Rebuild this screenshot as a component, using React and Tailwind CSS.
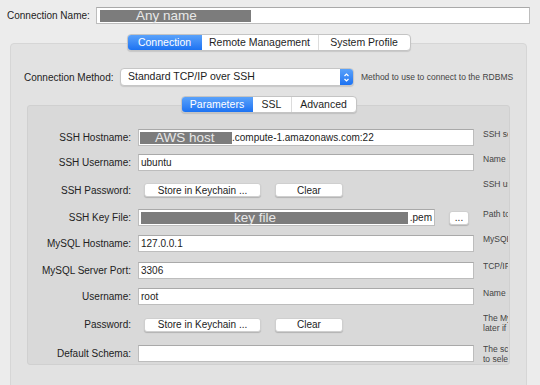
import React from 'react';

const FONT = { fontFamily: '"Liberation Sans", Arial, sans-serif' };

const Segmented = ({ items, active }) => (
  <div className="flex h-[17px] rounded-[4px] border border-[#c4c4c4] bg-white shadow-[0_1px_1px_rgba(0,0,0,0.12)] overflow-hidden">
    {items.map((item, index) => (
      <div
        key={item.label}
        className={`flex items-center justify-center text-[10.5px] leading-none ${item.w} ${
          index === active
            ? 'bg-gradient-to-b from-[#5aa2fa] to-[#1b72f2] text-white'
            : 'text-[#1e1e1e]'
        } ${index > 0 && index !== active && index - 1 !== active ? 'border-l border-[#dcdcdc]' : ''}`}
      >
        {item.label}
      </div>
    ))}
  </div>
);

const Input = ({ className = 'w-[336px]', children }) => (
  <div
    className={`h-[17px] bg-white border border-[#bdbdbd] border-t-[#a9a9a9] flex items-center px-[2px] text-[10px] text-[#1c1c1c] whitespace-nowrap overflow-hidden ${className}`}
  >
    {children}
  </div>
);

const Button = ({ className, children }) => (
  <div
    className={`h-[14px] bg-white rounded-[3px] border border-[#cfcfcf] shadow-[0_1px_1px_rgba(0,0,0,0.18)] flex items-center justify-center text-[10px] text-[#1c1c1c] ${className}`}
  >
    {children}
  </div>
);

// grey boxes that hide private values in the screenshot
const Redacted = ({ className, textClass, children }) => (
  <div className={`h-[12px] bg-[#7c7c7c] flex items-center text-[13.5px] text-[#e8e8e8] leading-none ${className}`}>
    <span className={textClass}>{children}</span>
  </div>
);

const Row = ({ label, h, hint, children }) => (
  <div className={`flex ${h}`}>
    <div className="w-[103px] flex items-center justify-end text-[10px] text-[#222]">{label}</div>
    <div className="w-[336px] ml-[7px] flex items-center">{children}</div>
    <div className="w-[25px] ml-[9px] pt-[4px] overflow-hidden text-[8.5px] leading-[10px] text-[#444] whitespace-nowrap">
      {hint.map((line) => (
        <div key={line}>{line}</div>
      ))}
    </div>
  </div>
);

const KeychainButtons = () => (
  <div className="flex items-center">
    <Button className="w-[117px] ml-[6px]">Store in Keychain ...</Button>
    <Button className="w-[68px] ml-[14px]">Clear</Button>
  </div>
);

export default function App() {
  return (
    <div className="w-[540px] h-[385px] bg-[#ececec] overflow-hidden flex flex-col pt-[7px]" style={FONT}>
      <div className="flex items-center">
        <div className="w-[96px] shrink-0 pl-[7px] text-[10px] text-[#222] whitespace-nowrap">Connection Name:</div>
        <Input className="w-[434px] h-[16px]">
          <Redacted className="w-[151px] ml-[1px]" textClass="ml-[36px]">Any name</Redacted>
        </Input>
      </div>

      <div className="ml-[10px] w-[517px] flex justify-center mt-[10px] relative z-10">
        <Segmented
          active={0}
          items={[
            { label: 'Connection', w: 'w-[74px]' },
            { label: 'Remote Management', w: 'w-[116px]' },
            { label: 'System Profile', w: 'w-[92px]' },
          ]}
        />
      </div>

      <div className="ml-[10px] w-[517px] h-[380px] shrink-0 -mt-[8px] bg-[#e2e2e2] border border-[#d6d6d6] rounded-[4px] pt-[24px]">
        <div className="flex items-center pl-[13px] h-[18px]">
          <div className="w-[96px] text-[10px] text-[#222] whitespace-nowrap">Connection Method:</div>
          <div className="w-[234px] h-[18px] bg-white rounded-[4px] border border-[#c6c6c6] shadow-[0_1px_1px_rgba(0,0,0,0.12)] flex items-center overflow-hidden">
            <span className="flex-1 pl-[7px] text-[10.5px] text-[#1c1c1c]">Standard TCP/IP over SSH</span>
            <div className="w-[13px] h-full bg-gradient-to-b from-[#5aa2fa] to-[#1b72f2] flex items-center justify-center">
              <svg width="7" height="11" viewBox="0 0 7 11" fill="none" stroke="white" strokeWidth="1.2">
                <path d="M1.5 4 L3.5 2 L5.5 4" />
                <path d="M1.5 7 L3.5 9 L5.5 7" />
              </svg>
            </div>
          </div>
          <div className="ml-[7px] text-[8.5px] text-[#444] whitespace-nowrap">Method to use to connect to the RDBMS</div>
        </div>

        <div className="flex justify-center mt-[10px] relative z-10">
          <Segmented
            active={0}
            items={[
              { label: 'Parameters', w: 'w-[71px]' },
              { label: 'SSL', w: 'w-[38px]' },
              { label: 'Advanced', w: 'w-[65px]' },
            ]}
          />
        </div>

        <div className="mx-[16px] h-[260px] -mt-[8px] bg-[#d9d9d9] border border-[#d0d0d0] rounded-[3px] pt-[19px]">
          <Row label="SSH Hostname:" h="h-[25px]" hint={['SSH server hostname']}>
            <Input>
              <Redacted className="w-[92px] -ml-[1px]" textClass="ml-[15px]">AWS host</Redacted>
              <span>.compute-1.amazonaws.com:22</span>
            </Input>
          </Row>
          <Row label="SSH Username:" h="h-[25px]" hint={['Name of the SSH user']}>
            <Input>ubuntu</Input>
          </Row>
          <Row label="SSH Password:" h="h-[30px]" hint={["SSH user's password"]}>
            <KeychainButtons />
          </Row>
          <Row label="SSH Key File:" h="h-[25px]" hint={['Path to SSH private key']}>
            <Input className="w-[297px]">
              <Redacted className="w-[267px]" textClass="ml-[93px]">key file</Redacted>
              <span className="ml-[2px]">.pem</span>
            </Input>
            <Button className="w-[20px] ml-[14px] text-[8px]">...</Button>
          </Row>
          <Row label="MySQL Hostname:" h="h-[27px]" hint={['MySQL server host']}>
            <Input>127.0.0.1</Input>
          </Row>
          <Row label="MySQL Server Port:" h="h-[27px]" hint={['TCP/IP port of the MySQL server']}>
            <Input>3306</Input>
          </Row>
          <Row label="Username:" h="h-[25px]" hint={['Name of the user']}>
            <Input>root</Input>
          </Row>
          <Row label="Password:" h="h-[31px]" hint={["The MySQL user's password.", "later if it's not set."]}>
            <KeychainButtons />
          </Row>
          <Row label="Default Schema:" h="h-[26px]" hint={['The schema to use as default', 'to select it later.']}>
            <Input />
          </Row>
        </div>
      </div>
    </div>
  );
}
